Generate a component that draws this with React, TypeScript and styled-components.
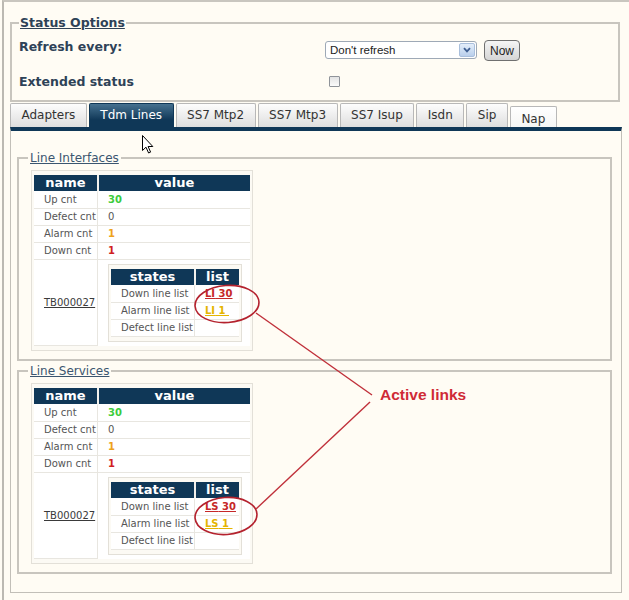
import React from "react";
import styled, { createGlobalStyle } from "styled-components";

const NAVY = "#0f3757";
const CREAM = "#fffcf4";
const LINE = "#c8c5be";

const GlobalStyle = createGlobalStyle`
  html, body {
    margin: 0;
    padding: 0;
    overflow: hidden;
    background: ${CREAM};
  }
  body {
    font-family: "DejaVu Sans", Verdana, sans-serif;
  }
`;

const Page = styled.div`
  position: relative;
  width: 629px;
  height: 600px;
`;

const Frame = styled.div`
  margin-left: 2px;
  height: 610px;
  box-sizing: border-box;
  border-left: 2px solid #bcb9b2;
  border-top: 2px solid #c9c6bf;
  padding: 13px 0 0 6px;
`;

const OptionsSet = styled.fieldset`
  margin: 0;
  width: 610px;
  box-sizing: border-box;
  border: 2px solid ${LINE};
  padding: 10px 8px 4px 7px;
`;

const OptionsLegend = styled.legend`
  padding: 0 1px;
  font-size: 12.5px;
  font-weight: bold;
  line-height: 15px;
  color: #2e4257;
  text-decoration: underline;
`;

const OptionRow = styled.div`
  display: grid;
  grid-template-columns: 306px auto;
  align-items: start;
  height: 21px;

  & + & {
    margin-top: 14px;
  }
`;

const OptionLabel = styled.div`
  font-size: 12.5px;
  font-weight: bold;
  line-height: 14px;
  color: #2e4257;
`;

const Controls = styled.div`
  display: flex;
  align-items: flex-start;
  gap: 7px;
`;

const SelectBox = styled.div`
  margin-top: 1px;
  width: 152px;
  height: 18px;
  box-sizing: border-box;
  border: 1px solid #9ea9b6;
  border-radius: 3px;
  background: #fff;
  display: flex;
  align-items: center;
  justify-content: space-between;
  padding: 0 1px 0 4px;
  font-family: "Liberation Sans", Arial, sans-serif;
  font-size: 11.5px;
  color: #222;
`;

const ArrowBox = styled.span`
  width: 16px;
  height: 14px;
  box-sizing: border-box;
  border: 1px solid #a9bfdc;
  border-radius: 2px;
  background: linear-gradient(#e4eefa, #b9cfec);
  display: flex;
  align-items: center;
  justify-content: center;
`;

const NowButton = styled.button`
  width: 36px;
  height: 21px;
  padding: 0;
  border: 1px solid #707070;
  border-radius: 4px;
  background: linear-gradient(#f5f5f5, #d5d5d5);
  font-family: "Liberation Sans", Arial, sans-serif;
  font-size: 12px;
  color: #222;
`;

const Check = styled.input`
  appearance: none;
  margin: 1px 0 0 4px;
  width: 11px;
  height: 11px;
  border: 1px solid #8f9399;
  border-radius: 1px;
  background: linear-gradient(#e3e3e3, #fbfbfb);
`;

const TabBar = styled.div`
  display: flex;
  align-items: flex-end;
  gap: 2px;
  height: 24px;
  margin-top: 1px;
`;

const Tab = styled.div<{ $active?: boolean; $low?: boolean }>`
  height: ${(p) => (p.$low ? 21 : 24)}px;
  box-sizing: border-box;
  padding: 0 10.5px;
  border: 1px solid ${(p) => (p.$active ? NAVY : "#b8b8b8")};
  border-bottom: none;
  border-radius: 2px 2px 0 0;
  background: ${(p) =>
    p.$active
      ? `linear-gradient(#46718f, ${NAVY} 70%)`
      : p.$low
      ? "linear-gradient(#ffffff, #f6f6f4)"
      : "linear-gradient(#fdfdfd, #dedede)"};
  color: ${(p) => (p.$active ? "#fff" : "#333")};
  font-size: 12px;
  line-height: ${(p) => (p.$low ? 24 : 23)}px;
  white-space: nowrap;
`;

const Panel = styled.div`
  width: 612px;
  height: 466px;
  box-sizing: border-box;
  border-top: 4px solid ${NAVY};
  border-left: 1px solid #c2bfb8;
  border-right: 1px solid #c2bfb8;
  border-bottom: 1px solid #c2bfb8;
  padding: 20px 9px 0 6px;
`;

const GroupSet = styled.fieldset`
  margin: 0;
  border: 2px solid ${LINE};
  padding: 5px 12px 8px 12px;

  & + & {
    margin-top: 3px;
  }
`;

const GroupLegend = styled.legend`
  margin-left: -3px;
  padding: 0 2px;
  font-size: 12px;
  line-height: 14px;
  color: #3b5670;
  text-decoration: underline;
`;

const TableBox = styled.div`
  display: block;
  width: fit-content;
  border: 1px solid #e3e0d8;
  background: #fcfaf4;
  padding: 4px 2px;
`;

const StatTable = styled.table<{ $first: number; $second: number }>`
  border-collapse: separate;
  border-spacing: 0;
  table-layout: fixed;
  width: ${(p) => p.$first + p.$second}px;

  col:first-child {
    width: ${(p) => p.$first}px;
  }
`;

const Head = styled.th`
  height: 17px;
  padding: 0;
  box-sizing: border-box;
  background: ${NAVY};
  border-bottom: 1px solid #fff;
  color: #fff;
  font-size: 13px;
  font-weight: bold;
  line-height: 16px;
  text-align: center;

  & + & {
    border-left: 2px solid #f1f0ec;
  }
`;

const Cell = styled.td`
  height: 17px;
  padding: 0 0 0 10px;
  box-sizing: border-box;
  background: #fff;
  border-bottom: 1px solid #e8e6e0;
  font-size: 10px;
  line-height: 16px;
  color: #555;
  white-space: nowrap;

  & + & {
    border-left: 1px solid #e8e6e0;
  }
`;

const NestCell = styled(Cell)`
  height: auto;
  padding: 4px 3px 4px 10px;
  border-bottom: none;
  vertical-align: middle;
`;

const Count = styled.span<{ $tone: string }>`
  font-weight: bold;
  color: ${(p) => p.$tone};
`;

const Device = styled.span`
  color: #3a3a3a;
  text-decoration: underline;
`;

const ListLink = styled.span<{ $tone: string }>`
  font-weight: bold;
  color: ${(p) => p.$tone};
  text-decoration: underline;
`;

const Overlay = styled.svg`
  position: absolute;
  left: 0;
  top: 0;
  pointer-events: none;
`;

const Callout = styled.div`
  position: absolute;
  left: 380px;
  top: 386px;
  font-family: "Liberation Sans", Arial, sans-serif;
  font-size: 15.5px;
  font-weight: bold;
  color: #cf2a36;
`;

const Pointer = styled.svg`
  position: absolute;
  left: 142px;
  top: 135px;
`;

const GREEN = "#3ccc3c";
const ORANGE = "#eea21c";
const RED = "#d01f1f";

const tabs = ["Adapters", "Tdm Lines", "SS7 Mtp2", "SS7 Mtp3", "SS7 Isup", "Isdn", "Sip", "Nap"];

const LineGroup = ({ title, prefix }: { title: string; prefix: string }) => (
  <GroupSet>
    <GroupLegend>{title}</GroupLegend>
    <TableBox>
      <StatTable $first={63} $second={153}>
        <colgroup>
          <col />
          <col />
        </colgroup>
        <tbody>
          <tr>
            <Head>name</Head>
            <Head>value</Head>
          </tr>
          <tr>
            <Cell>Up cnt</Cell>
            <Cell>
              <Count $tone={GREEN}>30</Count>
            </Cell>
          </tr>
          <tr>
            <Cell>Defect cnt</Cell>
            <Cell>0</Cell>
          </tr>
          <tr>
            <Cell>Alarm cnt</Cell>
            <Cell>
              <Count $tone={ORANGE}>1</Count>
            </Cell>
          </tr>
          <tr>
            <Cell>Down cnt</Cell>
            <Cell>
              <Count $tone={RED}>1</Count>
            </Cell>
          </tr>
          <tr>
            <Cell>
              <Device>TB000027</Device>
            </Cell>
            <NestCell>
              <TableBox>
                <StatTable $first={83} $second={45}>
                  <colgroup>
                    <col />
                    <col />
                  </colgroup>
                  <tbody>
                    <tr>
                      <Head>states</Head>
                      <Head>list</Head>
                    </tr>
                    <tr>
                      <Cell>Down line list</Cell>
                      <Cell>
                        <ListLink $tone="#c62828">{prefix}&nbsp;30</ListLink>
                      </Cell>
                    </tr>
                    <tr>
                      <Cell>Alarm line list</Cell>
                      <Cell>
                        <ListLink $tone="#e4b400">{prefix}&nbsp;1&nbsp;</ListLink>
                      </Cell>
                    </tr>
                    <tr>
                      <Cell>Defect line list</Cell>
                      <Cell />
                    </tr>
                  </tbody>
                </StatTable>
              </TableBox>
            </NestCell>
          </tr>
        </tbody>
      </StatTable>
    </TableBox>
  </GroupSet>
);

const App = (): JSX.Element => {
  return (
    <Page>
      <GlobalStyle />
      <Frame>
        <OptionsSet>
          <OptionsLegend>Status Options</OptionsLegend>
          <OptionRow>
            <OptionLabel>Refresh every:</OptionLabel>
            <Controls>
              <SelectBox>
                <span>Don't refresh</span>
                <ArrowBox>
                  <svg width="8" height="6" viewBox="0 0 8 6">
                    <path d="M1 1.2 L4 4.4 L7 1.2" fill="none" stroke="#3f5f92" strokeWidth="1.8" />
                  </svg>
                </ArrowBox>
              </SelectBox>
              <NowButton>Now</NowButton>
            </Controls>
          </OptionRow>
          <OptionRow>
            <OptionLabel>Extended status</OptionLabel>
            <Controls>
              <Check type="checkbox" readOnly />
            </Controls>
          </OptionRow>
        </OptionsSet>
        <TabBar>
          {tabs.map((name) => (
            <Tab key={name} $active={name === "Tdm Lines"} $low={name === "Nap"}>
              {name}
            </Tab>
          ))}
        </TabBar>
        <Panel>
          <LineGroup title="Line Interfaces" prefix="LI" />
          <LineGroup title="Line Services" prefix="LS" />
        </Panel>
      </Frame>

      <Overlay width="629" height="600" viewBox="0 0 629 600">
        <ellipse cx="227" cy="304" rx="32" ry="18.5" fill="none" stroke="#b4222e" strokeWidth="1.6" transform="rotate(-4 227 304)" />
        <ellipse cx="226" cy="516" rx="31" ry="18.5" fill="none" stroke="#b4222e" strokeWidth="1.6" transform="rotate(-4 226 516)" />
        <line x1="256" y1="313" x2="372" y2="395" stroke="#c0303a" strokeWidth="1.4" />
        <line x1="370" y1="402" x2="256" y2="509" stroke="#c0303a" strokeWidth="1.4" />
      </Overlay>
      <Callout>Active links</Callout>

      <Pointer width="12" height="19" viewBox="0 0 12 19">
        <path d="M0.5 0.5 L0.5 15.5 L4 12.2 L6.6 18 L8.6 17.1 L6.1 11.5 L10.8 11.5 Z" fill="#fff" stroke="#000" strokeWidth="1" />
      </Pointer>
    </Page>
  );
};

export default App;
